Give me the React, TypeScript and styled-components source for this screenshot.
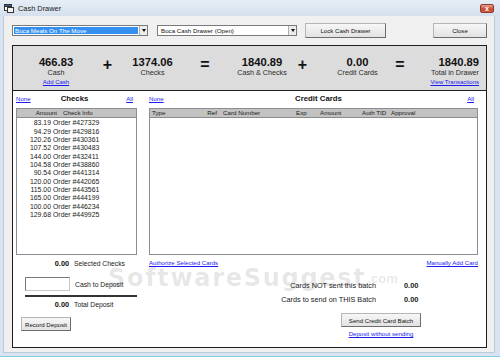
import React from "react";
import styled, { createGlobalStyle } from "styled-components";

const UI = `"Liberation Sans", Arial, sans-serif`;

const GlobalStyle = createGlobalStyle`
  html, body { margin: 0; padding: 0; }
  body { font-family: ${UI}; background: #ffffff; }
  * { box-sizing: border-box; }
`;

const Window = styled.div`
  position: relative;
  width: 500px;
  height: 357px;
  display: flex;
  flex-direction: column;
  background: #d8e4f1;
  border-bottom: 1px solid #86cbe8;
  overflow: hidden;
  font-family: ${UI};
  color: #111;
`;

const TitleBar = styled.div`
  height: 16px;
  flex: none;
  display: flex;
  align-items: center;
  padding: 0 6px 0 4px;
  background: linear-gradient(#e6edf6, #d4e0ed);
`;

const TitleText = styled.span`
  font-size: 7.4px;
  margin-left: 4px;
  color: #1a1a1a;
`;

const CloseBox = styled.div`
  margin-left: auto;
  width: 14px;
  height: 9px;
  border: 1px solid #8c3b2c;
  border-radius: 2px;
  background: linear-gradient(#eba391, #c9472f 60%, #d55d40);
  display: flex;
  align-items: center;
  justify-content: center;
  color: #fff;
  font: bold 7px "Liberation Sans", sans-serif;
  line-height: 1;
`;

const Body = styled.div`
  flex: 1;
  margin: 0 5px 3px 3px;
  background: #f0f0f0;
  border: 1px solid #bccadb;
  border-top: none;
  padding: 7px 7px 0 8px;
  display: flex;
  flex-direction: column;
`;

const TopRow = styled.div`
  height: 15px;
  display: flex;
  align-items: center;
`;

const Combo = styled.div<{ $w: number; $ml?: number }>`
  width: ${(p) => p.$w}px;
  margin-left: ${(p) => p.$ml ?? 0}px;
  height: 11px;
  border: 1px solid #7a7a7a;
  background: #fff;
  display: flex;
  align-items: stretch;
`;

const ComboText = styled.div<{ $selected?: boolean }>`
  flex: 1;
  margin: 1px;
  padding-left: ${(p) => (p.$selected ? 1 : 2)}px;
  background: ${(p) => (p.$selected ? "#3390f0" : "transparent")};
  color: ${(p) => (p.$selected ? "#fff" : "#111")};
  font-size: 6.2px;
  line-height: 7px;
  white-space: nowrap;
  overflow: hidden;
`;

const DropBtn = styled.div`
  width: 8px;
  background: #ececec;
  border-left: 1px solid #b0b0b0;
  display: flex;
  align-items: center;
  justify-content: center;
`;

const Arrow = styled.span`
  width: 0;
  height: 0;
  border-left: 2.5px solid transparent;
  border-right: 2.5px solid transparent;
  border-top: 3px solid #111;
`;

const Button = styled.button<{ $w: number; $ml?: number; $mt?: number; $tall?: boolean }>`
  width: ${(p) => p.$w}px;
  height: ${(p) => (p.$tall ? 15 : 14)}px;
  margin-left: ${(p) => p.$ml ?? 0}px;
  margin-top: ${(p) => p.$mt ?? 0}px;
  padding: 0;
  font-family: ${UI};
  font-size: 6.1px;
  color: #111;
  background: linear-gradient(#f7f7f7, #e2e2e2);
  border: 1px solid #b5b5b5;
  border-right-color: #6d6d6d;
  border-bottom-color: #6d6d6d;
  border-radius: 0;
  white-space: nowrap;
`;

const Spacer = styled.div`
  flex: 1;
`;

const Panel = styled.div`
  margin-top: 7px;
  border: 1px solid #1e1e1e;
  display: flex;
  flex-direction: column;
`;

const Summary = styled.div`
  height: 45px;
  background: #dcdcdc;
  border-bottom: 1px solid #1e1e1e;
  display: grid;
  grid-template-columns: 40px 63px 27px 78px 36px 45px 65px 20px 1fr;
  padding: 0 7px 0 23px;
`;

const Stat = styled.div<{ $right?: boolean }>`
  display: flex;
  flex-direction: column;
  align-items: ${(p) => (p.$right ? "flex-end" : "center")};
  padding-top: 10px;
  white-space: nowrap;
`;

const StatValue = styled.div`
  font-size: 11.2px;
  font-weight: bold;
  line-height: 12px;
  color: #111;
`;

const StatLabel = styled.div`
  font-size: 7.2px;
  line-height: 9px;
  color: #2a2a2a;
`;

const StatLink = styled.a`
  font-size: 6px;
  line-height: 7px;
  margin-top: 2px;
  color: #1a1af0;
  text-decoration: underline;
`;

const Op = styled.div`
  display: flex;
  justify-content: center;
  padding-top: 11px;
  font-family: "Liberation Sans", Arial, sans-serif;
  font-size: 16px;
  line-height: 16px;
  font-weight: bold;
  color: #111;
`;

const Main = styled.div`
  height: 256px;
  background: #fff;
  display: flex;
  gap: 12px;
  padding: 0 8px 0 3px;
`;

const Column = styled.div<{ $w?: number }>`
  ${(p) => (p.$w ? `width: ${p.$w}px; flex: none;` : "flex: 1;")}
  display: flex;
  flex-direction: column;
`;

const HeadRow = styled.div`
  height: 17px;
  padding: 4px 4px 0 0;
  display: grid;
  grid-template-columns: 1fr auto 1fr;
  align-items: start;
`;

const Link = styled.a<{ $end?: boolean }>`
  font-size: 6.1px;
  line-height: 8px;
  color: #1a1af0;
  text-decoration: underline;
  white-space: nowrap;
  justify-self: ${(p) => (p.$end ? "end" : "start")};
`;

const HeadTitle = styled.div<{ $shift?: number }>`
  margin-left: ${(p) => (p.$shift ?? 0) * 2}px;
  font-size: 7.8px;
  font-weight: bold;
  line-height: 8px;
  color: #111;
`;

const ListBox = styled.div`
  height: 147px;
  border: 1px solid #8a8f96;
  background: #fff;
  display: flex;
  flex-direction: column;
`;

const ListHead = styled.div`
  height: 9px;
  flex: none;
  background: #c2c2c2;
  border-bottom: 1px solid #8b8b8b;
  display: flex;
  align-items: center;
`;

const Cell = styled.div<{ $w?: number; $right?: boolean; $pl?: number; $pr?: number; $head?: boolean }>`
  ${(p) => (p.$w ? `width: ${p.$w}px; flex: none;` : "flex: 1;")}
  text-align: ${(p) => (p.$right ? "right" : "left")};
  padding-left: ${(p) => p.$pl ?? 0}px;
  padding-right: ${(p) => p.$pr ?? 0}px;
  font-size: ${(p) => (p.$head ? 6.2 : 6.9)}px;
  line-height: 8px;
  white-space: nowrap;
  color: #1a1a1a;
`;

const Rows = styled.div`
  padding-top: 1px;
`;

const Row = styled.div`
  height: 8.35px;
  display: flex;
  align-items: center;
`;

const SumRow = styled.div<{ $mt: number }>`
  margin-top: ${(p) => p.$mt}px;
  height: 10px;
  display: flex;
  align-items: center;
`;

const SumValue = styled.div`
  width: 53px;
  text-align: right;
  font-size: 7.3px;
  font-weight: bold;
  color: #111;
`;

const SumLabel = styled.div`
  margin-left: 5px;
  font-size: 6.8px;
  color: #222;
  white-space: nowrap;
`;

const CashRow = styled.div`
  margin-top: 9px;
  display: flex;
  align-items: center;
`;

const CashInput = styled.div`
  width: 45px;
  height: 14px;
  margin-left: 9px;
  background: #fff;
  border: 1px solid #7a7a7a;
  border-right-color: #c8c8c8;
  border-bottom-color: #c8c8c8;
`;

const Rule = styled.div`
  margin: 4px 0 0 9px;
  height: 2px;
  background: #333;
`;

const LinkRow = styled.div`
  margin-top: 3px;
  height: 10px;
  display: flex;
  justify-content: space-between;
  align-items: center;
`;

const Batch = styled.div`
  align-self: flex-end;
  margin-right: 57px;
  margin-top: 13px;
  display: flex;
  flex-direction: column;
  align-items: flex-end;
`;

const BatchGrid = styled.div`
  display: grid;
  grid-template-columns: auto 17px;
  column-gap: 28px;
  row-gap: 4px;
`;

const BatchText = styled.div<{ $bold?: boolean }>`
  height: 10px;
  line-height: 10px;
  font-size: ${(p) => (p.$bold ? 7.4 : 7.3)}px;
  text-align: ${(p) => (p.$bold ? "left" : "right")};
  font-weight: ${(p) => (p.$bold ? "bold" : "normal")};
  white-space: nowrap;
  color: #1a1a1a;
`;

const SendBox = styled.div`
  margin-top: 8px;
  display: flex;
  flex-direction: column;
  align-items: center;
  gap: 3px;
`;

const Watermark = styled.div`
  position: absolute;
  left: 108px;
  top: 266px;
  display: flex;
  align-items: flex-start;
  pointer-events: none;
  color: rgba(0, 0, 0, 0.1);
`;

const WaterBig = styled.span`
  font-family: "DejaVu Sans", sans-serif;
  font-weight: bold;
  font-size: 24px;
  line-height: 24px;
  letter-spacing: 1.7px;
`;

const WaterSmall = styled.span`
  font-family: "Liberation Sans", sans-serif;
  font-weight: bold;
  font-size: 13px;
  line-height: 13px;
  margin: 6px 0 0 1px;
`;

const checks: [string, string][] = [
  ["83.19", "Order #427329"],
  ["94.29", "Order #429816"],
  ["120.26", "Order #430361"],
  ["107.52", "Order #430483"],
  ["144.00", "Order #432411"],
  ["104.58", "Order #438860"],
  ["90.54", "Order #441314"],
  ["120.00", "Order #442065"],
  ["115.00", "Order #443561"],
  ["165.00", "Order #444199"],
  ["100.00", "Order #446234"],
  ["129.68", "Order #449925"],
];

const AppIcon = () => (
  <svg width="10" height="9" viewBox="0 0 10 9">
    <rect x="0.5" y="0.5" width="7" height="6" fill="#fff" stroke="#333" />
    <rect x="0.5" y="0.5" width="7" height="2" fill="#2d5fa8" stroke="#333" />
    <rect x="3.5" y="3.5" width="6" height="5" fill="#f2f2f2" stroke="#333" />
  </svg>
);

export default function App() {
  return (
    <>
      <GlobalStyle />
      <Window>
        <TitleBar>
          <AppIcon />
          <TitleText>Cash Drawer</TitleText>
          <CloseBox>x</CloseBox>
        </TitleBar>
        <Body>
          <TopRow>
            <Combo $w={136}>
              <ComboText $selected>Boca Meals On The Move</ComboText>
              <DropBtn>
                <Arrow />
              </DropBtn>
            </Combo>
            <Combo $w={140} $ml={9}>
              <ComboText>Boca Cash Drawer (Open)</ComboText>
              <DropBtn>
                <Arrow />
              </DropBtn>
            </Combo>
            <Button $w={81} $ml={8} $tall>
              Lock Cash Drawer
            </Button>
            <Spacer />
            <Button $w={54} $tall>
              Close
            </Button>
          </TopRow>
          <Panel>
            <Summary>
              <Stat>
                <StatValue>466.83</StatValue>
                <StatLabel>Cash</StatLabel>
                <StatLink href="#">Add Cash</StatLink>
              </Stat>
              <Op>+</Op>
              <Stat>
                <StatValue>1374.06</StatValue>
                <StatLabel>Checks</StatLabel>
              </Stat>
              <Op>=</Op>
              <Stat>
                <StatValue>1840.89</StatValue>
                <StatLabel>Cash &amp; Checks</StatLabel>
              </Stat>
              <Op>+</Op>
              <Stat>
                <StatValue>0.00</StatValue>
                <StatLabel>Credit Cards</StatLabel>
              </Stat>
              <Op>=</Op>
              <Stat $right>
                <StatValue>1840.89</StatValue>
                <StatLabel>Total in Drawer</StatLabel>
                <StatLink href="#">View Transactions</StatLink>
              </Stat>
            </Summary>
            <Main>
              <Column $w={121}>
                <HeadRow>
                  <Link href="#">None</Link>
                  <HeadTitle>Checks</HeadTitle>
                  <Link href="#" $end>
                    All
                  </Link>
                </HeadRow>
                <ListBox>
                  <ListHead>
                    <Cell $head $w={42} $right $pr={2}>
                      Amount
                    </Cell>
                    <Cell $head $pl={4}>
                      Check Info
                    </Cell>
                  </ListHead>
                  <Rows>
                    {checks.map(([amt, info]) => (
                      <Row key={info}>
                        <Cell $w={36} $right $pr={2}>
                          {amt}
                        </Cell>
                        <Cell $pl={0}>{info}</Cell>
                      </Row>
                    ))}
                  </Rows>
                </ListBox>
                <SumRow $mt={3}>
                  <SumValue>0.00</SumValue>
                  <SumLabel>Selected Checks</SumLabel>
                </SumRow>
                <CashRow>
                  <CashInput />
                  <SumLabel>Cash to Deposit</SumLabel>
                </CashRow>
                <Rule />
                <SumRow $mt={2}>
                  <SumValue>0.00</SumValue>
                  <SumLabel>Total Deposit</SumLabel>
                </SumRow>
                <Button $w={50} $ml={5} $mt={8}>
                  Record Deposit
                </Button>
              </Column>
              <Column>
                <HeadRow>
                  <Link href="#">None</Link>
                  <HeadTitle $shift={7}>Credit Cards</HeadTitle>
                  <Link href="#" $end>
                    All
                  </Link>
                </HeadRow>
                <ListBox>
                  <ListHead>
                    <Cell $head $w={50} $pl={2}>
                      Type
                    </Cell>
                    <Cell $head $w={18} $right $pr={1}>
                      Ref
                    </Cell>
                    <Cell $head $w={72} $pl={5}>
                      Card Number
                    </Cell>
                    <Cell $head $w={25} $pl={6}>
                      Exp
                    </Cell>
                    <Cell $head $w={40} $pl={5}>
                      Amount
                    </Cell>
                    <Cell $head $w={32} $pl={7}>
                      Auth TID
                    </Cell>
                    <Cell $head $pl={4}>
                      Approval
                    </Cell>
                  </ListHead>
                </ListBox>
                <LinkRow>
                  <Link href="#">Authorize Selected Cards</Link>
                  <Link href="#">Manually Add Card</Link>
                </LinkRow>
                <Batch>
                  <BatchGrid>
                    <BatchText>Cards NOT sent this batch</BatchText>
                    <BatchText $bold>0.00</BatchText>
                    <BatchText>Cards to send on THIS Batch</BatchText>
                    <BatchText $bold>0.00</BatchText>
                  </BatchGrid>
                  <SendBox>
                    <Button $w={80}>Send Credit Card Batch</Button>
                    <Link href="#">Deposit without sending</Link>
                  </SendBox>
                </Batch>
              </Column>
            </Main>
          </Panel>
        </Body>
        <Watermark>
          <WaterBig>SoftwareSuggest</WaterBig>
          <WaterSmall>.com</WaterSmall>
        </Watermark>
      </Window>
    </>
  );
}
